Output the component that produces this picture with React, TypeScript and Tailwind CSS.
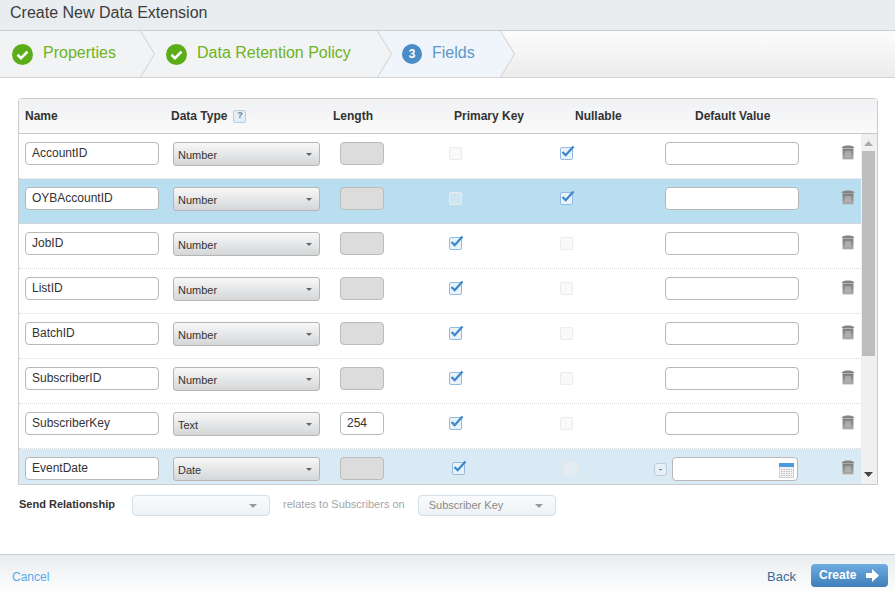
type Row = {
  name: string;
  type: string;
  length?: string;
  primary?: boolean;
  nullable?: boolean;
  date?: boolean;
  bg?: string;
};

const ROWS: Row[] = [
  { name: "AccountID", type: "Number", nullable: true },
  { name: "OYBAccountID", type: "Number", nullable: true, bg: "bg-[#b9def0]" },
  { name: "JobID", type: "Number", primary: true },
  { name: "ListID", type: "Number", primary: true },
  { name: "BatchID", type: "Number", primary: true },
  { name: "SubscriberID", type: "Number", primary: true },
  { name: "SubscriberKey", type: "Text", length: "254", primary: true },
  { name: "EventDate", type: "Date", primary: true, date: true, bg: "bg-[#d9eaf4]" },
];

const GreenCheck = () => (
  <svg width="21" height="21" viewBox="0 0 21 21" className="shrink-0">
    <circle cx="10.5" cy="10.5" r="10.5" fill="#5cae18" />
    <path d="M5.5 10.8l3.5 3.4 6.5-6.6" fill="none" stroke="#fff" strokeWidth="2.6" />
  </svg>
);

// arrow edge between wizard steps
const Chevron = ({ fill }: { fill: string }) => (
  <svg width="16" height="46" viewBox="0 0 16 46" className="absolute top-0 left-full z-10">
    <polygon points="0,0 14,23 0,46" fill={fill} />
    <polyline points="0.5,0 14.5,23 0.5,46" fill="none" stroke="#d8d8d8" strokeWidth="1.2" />
  </svg>
);

const Caret = ({ color, w = 9, h = 5 }: { color: string; w?: number; h?: number }) => (
  <svg width={w} height={h} viewBox="0 0 9 5" preserveAspectRatio="none" className="shrink-0">
    <polygon points="0,0 9,0 4.5,5" fill={color} />
  </svg>
);

const CheckBox = ({ checked, shift }: { checked?: boolean; shift?: string }) =>
  checked ? (
    <div className={`relative mt-[13px] h-[13px] w-[13px] rounded-[2px] border border-[#93bbdf] bg-[#eaf2fa] ${shift ?? ""}`}>
      <svg width="15" height="13" viewBox="0 0 15 13" className="absolute -top-[3px] left-0">
        <path d="M1.5 7l3.2 3.200L12.500 1.500" fill="none" stroke="#3a87cf" strokeWidth="2.300" />
      </svg>
    </div>
  ) : (
    <div className={`mt-[13px] h-[13px] w-[13px] rounded-[2px] border border-[#ebebeb] bg-[#f0f0f0]/40 ${shift ?? ""}`} />
  );

const Trash = () => (
  <svg width="14" height="15" viewBox="0 0 14 15" className="mt-[11px]">
    <defs>
      <linearGradient id="trashFill" x1="0" y1="0" x2="0" y2="1">
        <stop offset="0" stopColor="#7c7c7c" />
        <stop offset="1" stopColor="#adadad" />
      </linearGradient>
    </defs>
    <path d="M0.5 3C1.5 1 4 .4 5 .4h4c1 0 3.500 .6 4.500 2.600z" fill="#858585" />
    <rect x="1.5" y="3.400" width="11" height="11" fill="url(#trashFill)" />
    <path d="M5 6v6M7 6v6M9 6v6" stroke="#cfcfcf" strokeWidth="0.8" />
  </svg>
);

const Calendar = () => (
  <svg width="15" height="15" viewBox="0 0 15 15" className="absolute top-[5px] right-[3px]">
    <rect x="0.5" y="0.5" width="14" height="14" fill="#f2f2f2" stroke="#d0d0d0" />
    <rect x="0" y="0" width="15" height="4" fill="#4a9ae0" />
    <path d="M2 6.500h11M2 8.500h11M2 10.500h11M2 12.500h11" stroke="#b4b4b4" strokeWidth="0.8" strokeDasharray="1.500 1" />
  </svg>
);

const inputCls =
  "block h-[23px] rounded-[4px] border border-[#b8b8b8] bg-white px-[6px] pb-[2px] text-[12px] text-[#333] outline-none";

const FieldRow = ({ row }: { row: Row }) => (
  <div className={`grid h-[45px] shrink-0 grid-cols-[148px_167px_100px_105px_120px_176px_20px] items-start border-b border-dotted border-[#d8d8d8] pl-[6px] ${row.bg ?? "bg-white"}`}>
    <input readOnly value={row.name} className={`${inputCls} mt-[8px] w-[134px]`} />
    <div className="mt-[8px] flex h-[24px] w-[147px] items-center justify-between rounded-[3px] border border-[#b5b5b5] bg-gradient-to-b from-[#f8f8f8] to-[#d4d6d8] pr-[7px] pl-[4px] text-[11px] text-[#333]">
      <span className="pt-[2px]">{row.type}</span>
      <Caret color="#666" w={6} h={3} />
    </div>
    {row.length ? (
      <input readOnly value={row.length} className={`${inputCls} mt-[8px] w-[44px]`} />
    ) : (
      <div className="mt-[8px] h-[23px] w-[44px] rounded-[4px] border border-[#bbb] bg-[#dcdcdc]" />
    )}
    <div className="pl-[9px]">
      <CheckBox checked={row.primary} shift={row.date ? "ml-[3px]" : ""} />
    </div>
    <div className="pl-[15px]">
      <CheckBox checked={row.nullable} shift={row.date ? "ml-[4px]" : ""} />
    </div>
    {row.date ? (
      <div className="-ml-[11px] flex items-start">
        <div className="mt-[14px] flex h-[13px] w-[13px] items-center justify-center rounded-[3px] border border-[#bcccdc] bg-[#e8eff5] text-[9px] font-bold leading-none text-[#44769f]">
          -
        </div>
        <div className="relative mt-[8px] ml-[5px] h-[24px] w-[126px] rounded-[4px] border border-[#b8b8b8] bg-white">
          <Calendar />
        </div>
      </div>
    ) : (
      <input readOnly className={`${inputCls} mt-[8px] w-[134px]`} />
    )}
    <Trash />
  </div>
);

const HeadCell = ({ className, children }: { className: string; children: React.ReactNode }) => (
  <div className={`text-[12px] font-bold text-[#333] ${className}`}>{children}</div>
);

const DisabledSelect = ({ label }: { label?: string }) => (
  <div className="flex h-[21px] w-[138px] items-center justify-between rounded-[4px] border border-[#d3e0ea] bg-gradient-to-b from-[#fafbfc] to-[#eef2f5] pr-[12px] pl-[10px] text-[11px] text-[#8a8a8a]">
    <span>{label}</span>
    <Caret color="#999" w={8} h={4} />
  </div>
);

export default function App() {
  return (
    <div className="flex h-[596px] w-[895px] flex-col overflow-hidden bg-white font-['Liberation_Sans',Arial,sans-serif]">
      {/* title */}
      <div className="flex h-[31px] shrink-0 items-center border-b border-[#ccc] bg-[#e9edf0] pb-[4px] pl-[10px] text-[16px] text-[#3c3c3c]">
        Create New Data Extension
      </div>

      {/* wizard steps */}
      <div className="flex h-[47px] shrink-0 border-b border-[#d4d4d4] bg-gradient-to-b from-[#fcfcfc] to-[#ececec]">
        <div className="relative flex w-[140px] items-center bg-[#f2f3f5] pl-[12px] text-[16px] text-[#6db321]">
          <GreenCheck />
          <span className="ml-[10px] pb-[2px]">Properties</span>
          <Chevron fill="#f2f3f5" />
        </div>
        <div className="relative flex w-[237px] items-center bg-[#f2f3f5] pl-[26px] text-[16px] text-[#6db321]">
          <GreenCheck />
          <span className="ml-[10px] pb-[2px]">Data Retention Policy</span>
          <Chevron fill="#f2f3f5" />
        </div>
        <div className="relative flex w-[123px] items-center bg-[#eff5fb] pl-[25px] text-[16px] text-[#5b98c9]">
          <div className="flex h-[20px] w-[20px] shrink-0 items-center justify-center rounded-full bg-[#4a8cc5] text-[12px] font-bold text-white">
            3
          </div>
          <span className="ml-[10px] pb-[2px]">Fields</span>
          <Chevron fill="#eff5fb" />
        </div>
      </div>

      {/* fields table */}
      <div className="mx-[18px] mt-[20px] h-[387px] w-[860px] shrink-0 overflow-hidden rounded-t-[4px] border border-[#ccc]">
        <div className="flex h-[35px] items-center border-b border-[#c8c8c8] bg-gradient-to-b from-[#f0f1f3] to-[#fafafa]">
          <HeadCell className="ml-[6px] w-[146px]">Name</HeadCell>
          <HeadCell className="flex w-[162px] items-center">
            Data Type
            <span className="ml-[6px] flex h-[13px] w-[13px] items-center justify-center rounded-[2px] border border-[#b9cfe0] bg-[#e6eef5] text-[9px] text-[#5c7f9c]">?</span>
          </HeadCell>
          <HeadCell className="w-[121px]">Length</HeadCell>
          <HeadCell className="w-[121px]">Primary Key</HeadCell>
          <HeadCell className="w-[120px]">Nullable</HeadCell>
          <HeadCell className="">Default Value</HeadCell>
        </div>
        <div className="flex h-[350px]">
          <div className="flex h-[350px] w-[842px] flex-col overflow-hidden">
            {ROWS.map((row) => (
              <FieldRow key={row.name} row={row} />
            ))}
          </div>
          {/* scrollbar */}
          <div className="flex w-[16px] flex-col bg-[#f0f0f0]">
            <svg width="9" height="5" viewBox="0 0 9 5" className="mt-[7px] ml-[3px]">
              <polygon points="0,5 9,5 4.5,0" fill="#aaa" />
            </svg>
            <div className="mt-[5px] ml-[1px] h-[205px] w-[13px] bg-[#bdbdbd]" />
            <div className="mt-auto mb-[7px] ml-[3px]">
              <Caret color="#444" />
            </div>
          </div>
        </div>
      </div>

      {/* send relationship */}
      <div className="mt-[10px] flex items-center pl-[19px] text-[11px]">
        <span className="w-[113px] pb-[2px] font-bold text-[#333]">Send Relationship</span>
        <DisabledSelect />
        <span className="mr-[13px] ml-[13px] pb-[2px] text-[#a5a5a5]">relates to Subscribers on</span>
        <DisabledSelect label="Subscriber Key" />
      </div>

      {/* footer */}
      <div className="mt-auto flex h-[42px] shrink-0 items-center border-t border-[#ccc] bg-gradient-to-b from-[#e9edf0] to-white pr-[7px] pl-[12px]">
        <span className="pt-[3px] text-[12px] text-[#5aa9e6]">Cancel</span>
        <span className="mr-[15px] ml-auto pt-[2px] text-[13px] text-[#3b6a94]">Back</span>
        <div className="flex h-[23px] w-[77px] items-center rounded-[4px] bg-gradient-to-b from-[#6dabe2] to-[#3f7fb9] pr-[9px] pb-[1px] pl-[8px] text-[12px] font-bold text-white">
          Create
          <svg width="13" height="13" viewBox="0 0 13 13" className="ml-auto">
            <polygon points="0,4 6,4 6,0 13,6.500 6,13 6,9 0,9" fill="#fff" />
          </svg>
        </div>
      </div>
    </div>
  );
}
